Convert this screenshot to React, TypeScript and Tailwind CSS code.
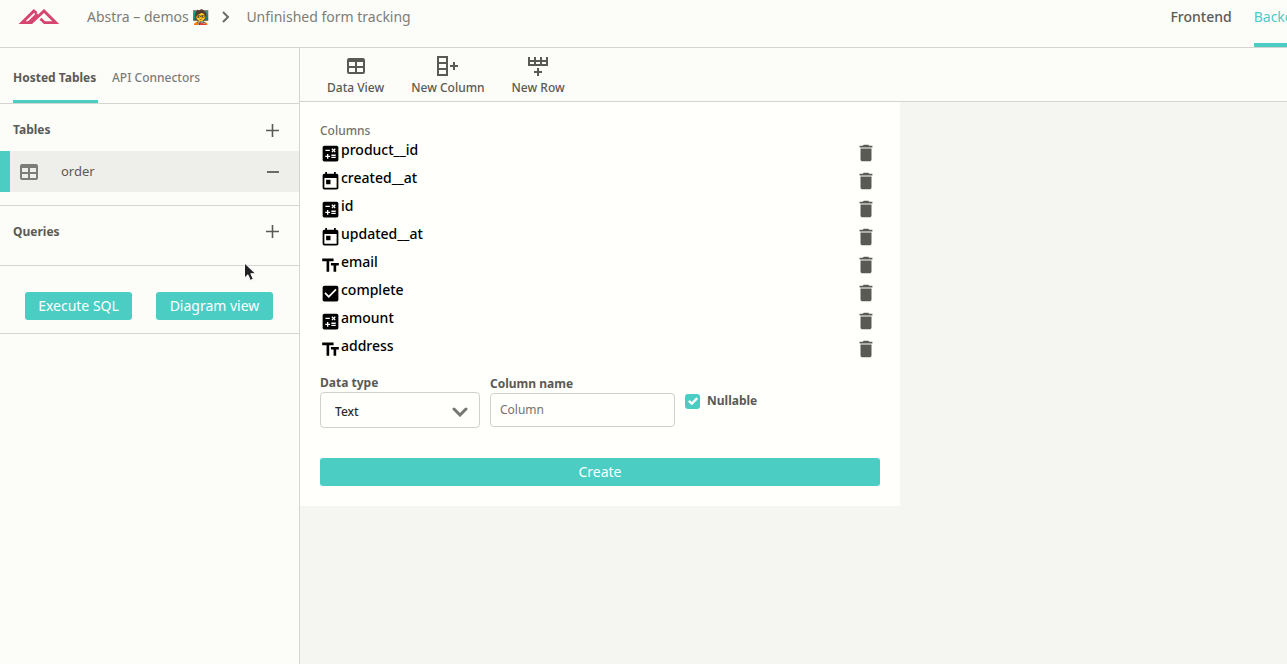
import type { ReactNode } from "react";
import { MdCalculate, MdCheckBox, MdDelete, MdTextFields, MdToday } from "react-icons/md";

const columns = [
  { name: "product__id", Icon: MdCalculate },
  { name: "created__at", Icon: MdToday },
  { name: "id", Icon: MdCalculate },
  { name: "updated__at", Icon: MdToday },
  { name: "email", Icon: MdTextFields },
  { name: "complete", Icon: MdCheckBox },
  { name: "amount", Icon: MdCalculate },
  { name: "address", Icon: MdTextFields },
];

function Logo() {
  return (
    <svg width="42" height="16" viewBox="0 0 42 16" fill="none" stroke="#d6456f" strokeWidth="2.8" aria-hidden="true">
      <path d="m18.5 4.2-2.6-2.3L4 13.7H13.5L26 1.9 37.8 13.7H26.5L22.5 9.8" />
      <path d="M10.5 13.7 19.5 5" />
    </svg>
  );
}

function TableIcon() {
  return (
    <svg width="18" height="16" viewBox="0 0 18 16" fill="currentColor" fillRule="evenodd" aria-hidden="true">
      <path d="M2 0h14a2 2 0 0 1 2 2v12a2 2 0 0 1-2 2H2a2 2 0 0 1-2-2V2a2 2 0 0 1 2-2ZM2 4v4h6V4Zm8 0v4h6V4ZM2 10v4h6v-4Zm8 0v4h6v-4Z" />
    </svg>
  );
}

function ColumnIcon() {
  return (
    <svg width="21" height="20" viewBox="0 0 21 20" fill="none" stroke="currentColor" strokeWidth="2" aria-hidden="true">
      <path d="M1 1h9v18H1ZM1 7h9M1 13h9M13 10h8M17 6v8" />
    </svg>
  );
}

function RowIcon() {
  return (
    <svg width="20" height="20" viewBox="0 0 20 20" fill="none" stroke="currentColor" strokeWidth="2" aria-hidden="true">
      <path d="M1 1v8h18V1M1 5h18M7 1v8M13 1v8M10 12v8M6 16h8" />
    </svg>
  );
}

function Plus() {
  return (
    <svg width="13" height="13" viewBox="0 0 13 13" stroke="#5a5a55" strokeWidth="1.6" aria-hidden="true">
      <path d="M0 6.5h13M6.5 0v13" />
    </svg>
  );
}

function Tool({ label, children }: { label: string; children: ReactNode }) {
  return (
    <button className="flex flex-col items-center gap-1 text-xs leading-4 font-medium">
      <span className="flex h-5 items-center">{children}</span>
      {label}
    </button>
  );
}

export default function App() {
  return (
    <div className="relative flex min-h-screen flex-col overflow-hidden bg-[#f5f5f2] font-['Noto_Sans',sans-serif] text-[#5a5a55]">
      <header className="flex h-12 items-start overflow-hidden border-b border-[#d3d5d0] bg-[#fcfcf9]">
        <div className="flex h-[34px] grow items-center pl-[18px] text-sm whitespace-nowrap text-[#7d7d78]">
          <Logo />
          <a href="#demos" className="ml-[27px]">Abstra – demos 🧑‍🏫</a>
          <svg className="mr-4 ml-[13px] shrink-0" width="8" height="12" viewBox="0 0 8 12" fill="none" stroke="#6b6b66" strokeWidth="2" aria-hidden="true">
            <path d="m1 1 5 5-5 5" />
          </svg>
          <span>Unfinished form tracking</span>
        </div>
        <nav className="-mr-[23px] flex h-full shrink-0 gap-[22px] text-sm">
          <a href="#frontend" className="pt-[7px] font-medium">Frontend</a>
          <a href="#backend" className="border-b-4 border-[#4bcdc4] pt-[7px] text-[#4bcdc4]">Backend</a>
        </nav>
      </header>

      <div className="flex grow">
        <aside className="w-[300px] shrink-0 border-r border-[#d3d5d0] bg-[#fcfcf9] text-[13px]">
          <div className="flex h-14 gap-3.5 border-b border-[#d3d5d0] pl-[13px]">
            <button className="w-[85px] border-b-3 border-[#4bcdc4] pt-[7px] text-left text-xs font-bold">Hosted Tables</button>
            <button className="border-b-3 border-transparent pt-[7px] text-xs font-medium text-[#7d7d78]">API Connectors</button>
          </div>
          <section className="border-b border-[#d3d5d0] pb-[13px]">
            <div className="flex h-[47px] items-center justify-between pt-[5px] pr-5 pl-[13px]">
              <h2 className="text-xs font-bold">Tables</h2>
              <button aria-label="Add table"><Plus /></button>
            </div>
            <div className="flex h-[41px] items-center border-l-10 border-[#4bcdc4] bg-[#eeeeeb] pr-5 pl-2.5">
              <span className="text-[#7d7d78]"><TableIcon /></span>
              <span className="ml-[23px] grow">order</span>
              <button aria-label="Remove table" className="h-0.5 w-3 bg-[#6b6b66]" />
            </div>
          </section>
          <section className="flex h-[60px] items-center justify-between border-b border-[#d3d5d0] pr-5 pb-2 pl-[13px]">
            <h2 className="text-xs font-bold">Queries</h2>
            <button aria-label="Add query"><Plus /></button>
          </section>
          <div className="flex gap-6 border-b border-[#d3d5d0] px-[25px] pt-[26px] pb-[13px] text-sm text-white">
            <button className="h-7 w-[107px] rounded-[3px] bg-[#4bcdc4]">Execute SQL</button>
            <button className="h-7 w-[117px] rounded-[3px] bg-[#4bcdc4]">Diagram view</button>
          </div>
        </aside>

        <main className="min-w-0 grow">
          <div className="flex h-[54px] items-start gap-[27px] border-b border-[#d3d5d0] bg-[#fcfcf9] pt-2 pl-[27px]">
            <Tool label="Data View"><TableIcon /></Tool>
            <Tool label="New Column"><ColumnIcon /></Tool>
            <Tool label="New Row"><RowIcon /></Tool>
          </div>
          <section className="max-w-[600px] bg-[#fffffc] px-5 pt-5 pb-5">
            <h3 className="text-xs leading-[18px] font-medium text-[#73736e]">Columns</h3>
            <ul>
              {columns.map(({ name, Icon }) => (
                <li key={name} className="flex h-7 items-start text-sm leading-5 font-medium text-black">
                  <Icon size={21} className="mt-[3px]" />
                  <span className="grow">{name}</span>
                  <button aria-label={`Delete ${name}`} className="mt-0.5 mr-[3px] text-[#5a5a55]"><MdDelete size={22} /></button>
                </li>
              ))}
            </ul>
            <form className="pt-2.5">
              <div className="flex items-center gap-2.5 text-xs font-bold">
                <div className="relative w-40">
                  <label htmlFor="type" className="block leading-[18px]">Data type</label>
                  <select id="type" className="block h-9 w-full appearance-none rounded border border-[#cfd1cc] bg-[#fffffc] px-3.5 pt-[3px] text-xs font-medium text-[#2b2b28]">
                    <option>Text</option>
                  </select>
                  <svg className="pointer-events-none absolute right-3 bottom-[11px]" width="16" height="10" viewBox="0 0 16 10" fill="none" stroke="#777772" strokeWidth="3" strokeLinecap="round" aria-hidden="true">
                    <path d="m2 2 6 6 6-6" />
                  </svg>
                </div>
                <div className="w-[185px]">
                  <label htmlFor="name" className="block leading-[18px]">Column name</label>
                  <input id="name" placeholder="Column" className="block h-[34px] w-full rounded border border-[#cfd1cc] px-[9px] pb-0.5 text-xs font-normal placeholder:text-[#73736e]" />
                </div>
                <label className="relative flex items-center gap-[7px]">
                  <input type="checkbox" defaultChecked className="size-[15px] appearance-none rounded-[3px] bg-[#4bcdc4]" />
                  <svg className="pointer-events-none absolute left-[3px]" width="10" height="8" viewBox="0 0 10 8" fill="none" stroke="white" strokeWidth="2.4" aria-hidden="true">
                    <path d="m.8 3.8 3 2.8L9.2 1" />
                  </svg>
                  Nullable
                </label>
              </div>
              <button type="button" className="mt-[30px] block h-7 w-full rounded-[3px] bg-[#4bcdc4] text-sm text-white">Create</button>
            </form>
          </section>
        </main>
      </div>

      <svg className="pointer-events-none absolute top-[262px] left-[243px]" width="14" height="20" viewBox="0 0 14 20" aria-hidden="true">
        <path d="M1.5 1v15l3.4-3.2 2.5 5.6 2.9-1.3-2.5-5.4h4.8Z" fill="#222" stroke="#fff" strokeWidth="1" />
      </svg>
    </div>
  );
}
